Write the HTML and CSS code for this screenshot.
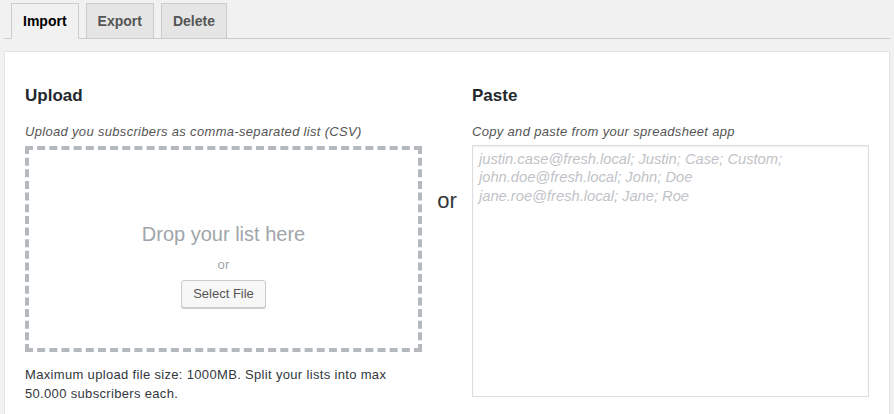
FILE: index.html
```html
<!DOCTYPE html>
<html lang="en">
<head>
<meta charset="utf-8">
<title>Import</title>
<link rel="stylesheet" href="styles.css">
</head>
<body>
<div class="page">
  <nav class="tabs">
    <a class="tab tab-active" href="#">Import</a>
    <a class="tab" href="#">Export</a>
    <a class="tab" href="#">Delete</a>
  </nav>
  <section class="panel">
    <div class="col">
      <h3 class="heading">Upload</h3>
      <p class="desc">Upload you subscribers as comma-separated list (CSV)</p>
      <div class="dropzone">
        <div class="drop-title">Drop your list here</div>
        <div class="drop-or">or</div>
        <button class="button" type="button">Select File</button>
      </div>
      <p class="note">Maximum upload file size: 1000MB. Split your lists into max 50.000 subscribers each.</p>
    </div>
    <div class="middle">or</div>
    <div class="col">
      <h3 class="heading">Paste</h3>
      <p class="desc">Copy and paste from your spreadsheet app</p>
      <textarea class="paste" placeholder="justin.case@fresh.local; Justin; Case; Custom;
john.doe@fresh.local; John; Doe
jane.roe@fresh.local; Jane; Roe"></textarea>
    </div>
  </section>
</div>
</body>
</html>
```
FILE: styles.css
```css
html, body {
  margin: 0;
  padding: 0;
  height: 414px;
  overflow: hidden;
  background: #f1f1f1;
  font-family: "Liberation Sans", Arial, sans-serif;
  color: #444;
  font-size: 13px;
}

.page {
  margin: 0 4px;
  padding-top: 3px;
}

.tabs {
  display: flex;
  border-bottom: 1px solid #ccc;
  padding-left: 7px;
  gap: 7px;
}

.tab {
  display: block;
  border: 1px solid #ccc;
  border-bottom: none;
  background: #e5e5e5;
  color: #555;
  font-size: 14px;
  line-height: 24px;
  font-weight: 700;
  padding: 5px 11px;
  text-decoration: none;
}

.tab-active {
  background: #f1f1f1;
  color: #000;
  border-bottom: 1px solid #f1f1f1;
  margin-bottom: -1px;
}

.panel {
  margin-top: 12px;
  background: #fff;
  border: 1px solid #e5e5e5;
  padding: 0 20px 20px;
  display: grid;
  grid-template-columns: 1fr 50px 1fr;
  min-height: 400px;
  box-sizing: border-box;
}

.col {
  display: flex;
  flex-direction: column;
}

.heading {
  margin: 34px 0 0;
  font-size: 17px;
  line-height: 20px;
  font-weight: 700;
  color: #23282d;
}

.desc {
  margin: 16px 0 0;
  font-style: italic;
  color: #555;
  line-height: 19px;
  letter-spacing: 0.32px;
}

.dropzone {
  margin-top: 5px;
  height: 206px;
  box-sizing: border-box;
  border: 4px dashed #b4b9be;
  padding-top: 70px;
  display: flex;
  flex-direction: column;
  align-items: center;
}

.drop-title {
  font-size: 20px;
  line-height: 28px;
  color: #a0a5aa;
}

.drop-or {
  margin-top: 7px;
  line-height: 19px;
  color: #a0a5aa;
  letter-spacing: 0.3px;
}

.button {
  margin-top: 6px;
  height: 28px;
  padding: 0 11px 1px;
  font-family: inherit;
  font-size: 13px;
  line-height: 26px;
  color: #555;
  background: #f7f7f7;
  border: 1px solid #ccc;
  border-radius: 3px;
  box-shadow: 0 1px 0 #ccc;
}

.note {
  margin: 13px 0 0;
  line-height: 19px;
  color: #32373c;
  letter-spacing: 0.33px;
}

.middle {
  padding-top: 136px;
  text-align: center;
  font-size: 22px;
  line-height: 26px;
  color: #32373c;
}

.paste {
  margin-top: 4px;
  height: 252px;
  box-sizing: border-box;
  width: 100%;
  resize: none;
  border: 1px solid #ddd;
  box-shadow: inset 0 1px 2px rgba(0, 0, 0, 0.07);
  padding: 4px 6px;
  font-family: "Liberation Sans", Arial, sans-serif;
  font-size: 14.7px;
  line-height: 18.4px;
  color: #333;
  background: #fff;
}

.paste::placeholder {
  color: #bfc3c7;
  font-style: italic;
}
```
